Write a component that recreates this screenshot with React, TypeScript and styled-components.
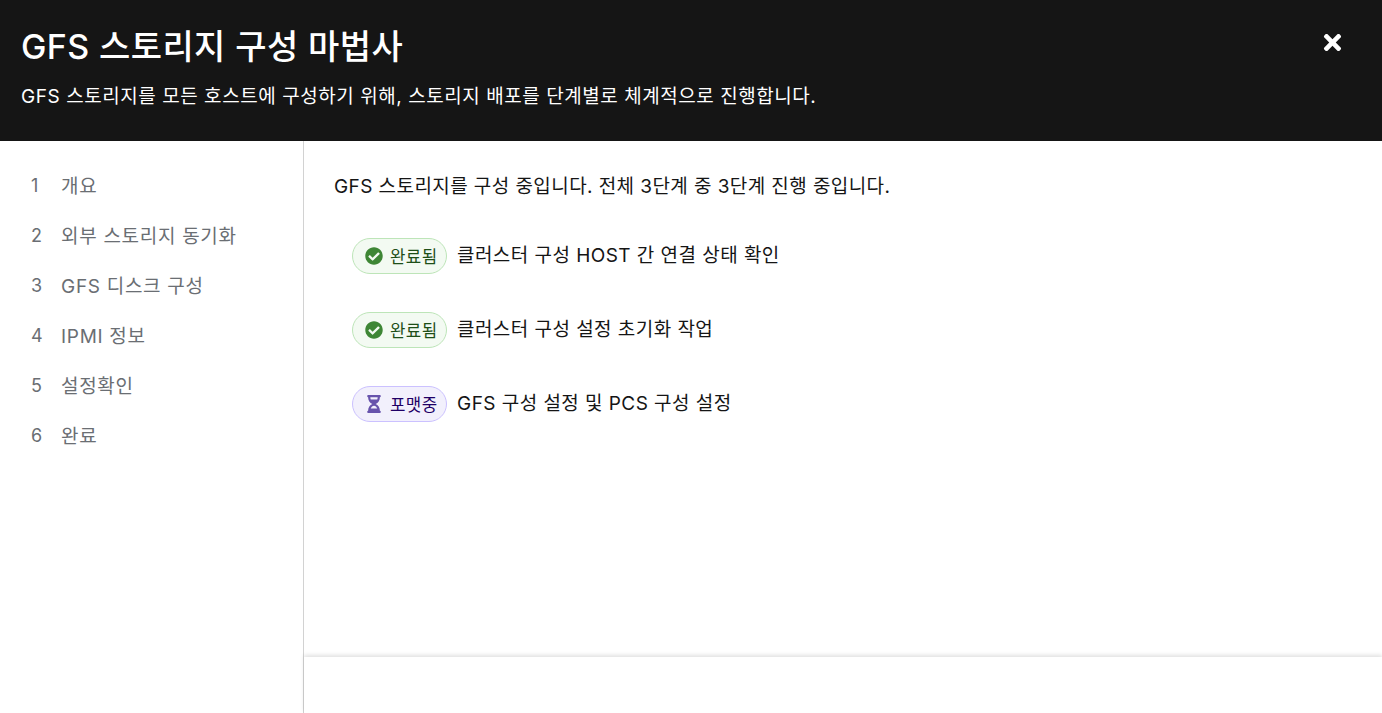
import styled, { createGlobalStyle } from "styled-components";
import { FaCheckCircle, FaHourglassHalf, FaTimes } from "react-icons/fa";

const GlobalStyle = createGlobalStyle`
  html, body {
    margin: 0;
    padding: 0;
    height: 100%;
    background: #fff;
    font-family: "Inter", "Noto Sans CJK KR", sans-serif;
  }
  #root { height: 100%; }
`;

const steps = ["개요", "외부 스토리지 동기화", "GFS 디스크 구성", "IPMI 정보", "설정확인", "완료"];

type Status = "done" | "progress";

const tasks: { status: Status; label: string; text: string }[] = [
  { status: "done", label: "완료됨", text: "클러스터 구성 HOST 간 연결 상태 확인" },
  { status: "done", label: "완료됨", text: "클러스터 구성 설정 초기화 작업" },
  { status: "progress", label: "포맷중", text: "GFS 구성 설정 및 PCS 구성 설정" },
];

const App = () => {
  return (
    <>
      <GlobalStyle />
      <Wizard>
        <Header>
          <Title>GFS 스토리지 구성 마법사</Title>
          <Description>GFS 스토리지를 모든 호스트에 구성하기 위해, 스토리지 배포를 단계별로 체계적으로 진행합니다.</Description>
          <CloseButton aria-label="닫기">
            <FaTimes />
          </CloseButton>
        </Header>
        <Body>
          {/* Step list */}
          <Nav>
            {steps.map((step, i) => (
              <NavItem key={step}>
                <NavNumber>{i + 1}</NavNumber>
                <NavLabel>{step}</NavLabel>
              </NavItem>
            ))}
          </Nav>

          <Main>
            <Content>
              <Intro>GFS 스토리지를 구성 중입니다. 전체 3단계 중 3단계 진행 중입니다.</Intro>
              <TaskList>
                {tasks.map((task) => (
                  <Task key={task.text}>
                    <Badge $status={task.status}>
                      <BadgeIcon>
                        {task.status === "done" ? <FaCheckCircle /> : <FaHourglassHalf />}
                      </BadgeIcon>
                      <BadgeText $status={task.status}>{task.label}</BadgeText>
                    </Badge>
                    <TaskText>{task.text}</TaskText>
                  </Task>
                ))}
              </TaskList>
            </Content>
            <Footer />
          </Main>
        </Body>
      </Wizard>
    </>
  );
};

const Wizard = styled.div`
  display: flex;
  flex-direction: column;
  height: 713px;
  overflow: hidden;
`;

const Header = styled.header`
  position: relative;
  box-sizing: border-box;
  height: 141px;
  flex: none;
  padding: 25px 21px 0;
  background: #151515;
  color: #fff;
`;

const Title = styled.h1`
  margin: 0;
  font-size: 34px;
  font-weight: 500;
  letter-spacing: 0.4px;
  line-height: 44px;
`;

const Description = styled.p`
  margin: 14px 0 0;
  font-size: 19px;
  font-weight: 400;
  letter-spacing: 0.55px;
  line-height: 28px;
`;

const CloseButton = styled.button`
  position: absolute;
  top: 30px;
  right: 37px;
  display: flex;
  padding: 0;
  border: 0;
  background: none;
  color: #fff;
  font-size: 25px;
`;

const Body = styled.div`
  display: flex;
  flex: 1;
  min-height: 0;
`;

const Nav = styled.nav`
  box-sizing: border-box;
  width: 304px;
  flex: none;
  padding: 19px 0 0 31px;
  border-right: 1px solid #d2d2d2;
`;

const NavItem = styled.div`
  display: flex;
  height: 50px;
  align-items: center;
  color: #6a6e73;
`;

const NavNumber = styled.span`
  width: 30px;
  flex: none;
  font-size: 18px;
`;

const NavLabel = styled.span`
  padding-bottom: 2px;
  font-size: 19px;
  letter-spacing: 0.7px;
`;

const Main = styled.main`
  display: flex;
  flex: 1;
  flex-direction: column;
  min-width: 0;
`;

const Content = styled.div`
  flex: 1;
  padding: 32px 30px 0;
`;

const Intro = styled.p`
  margin: 0;
  font-size: 19px;
  letter-spacing: 0.42px;
  line-height: 27px;
  color: #151515;
`;

const TaskList = styled.div`
  display: flex;
  flex-direction: column;
  gap: 38px;
  margin-top: 37.5px;
  padding-left: 18px;
`;

const Task = styled.div`
  display: flex;
  height: 36px;
  align-items: center;
  gap: 10px;
`;

const TaskText = styled.span`
  padding-bottom: 5px;
  font-size: 19px;
  letter-spacing: 0.45px;
  color: #151515;
`;

const Badge = styled.span<{ $status: Status }>`
  box-sizing: border-box;
  display: inline-flex;
  width: 95px;
  height: 36px;
  align-items: center;
  gap: 7px;
  padding-left: 12px;
  border: 1px solid ${({ $status }) => ($status === "done" ? "#bde5b8" : "#cbc1ff")};
  border-radius: 30px;
  background: ${({ $status }) => ($status === "done" ? "#f3faf2" : "#f2f0fc")};
  color: ${({ $status }) => ($status === "done" ? "#3e8635" : "#6753ac")};
`;

const BadgeIcon = styled.span`
  display: flex;
  width: 18px;
  flex: none;
  justify-content: center;
  font-size: 18px;
`;

const BadgeText = styled.span<{ $status: Status }>`
  font-size: 16.8px;
  letter-spacing: 0.4px;
  color: ${({ $status }) => ($status === "done" ? "#1e4f18" : "#1f0066")};
`;

const Footer = styled.div`
  height: 56px;
  flex: none;
  background: #fff;
  box-shadow: 0 -2px 4px rgba(3, 3, 3, 0.12);
`;

export default App;
